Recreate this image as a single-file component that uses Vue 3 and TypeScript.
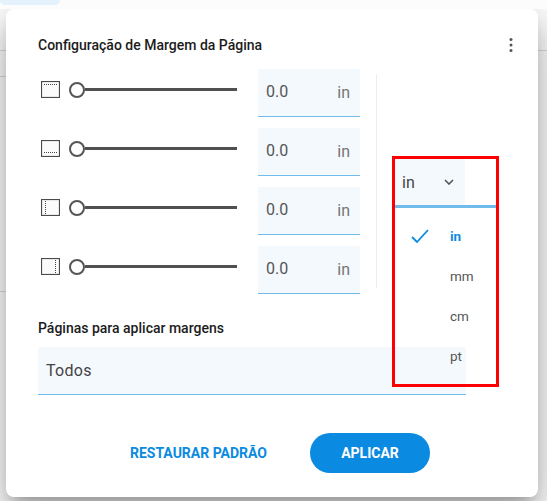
<script setup lang="ts">
const rows = [
  { id: 'top', dash: 'M3 3.5H17' },
  { id: 'bottom', dash: 'M3 12.5H17' },
  { id: 'left', dash: 'M4.5 2V15' },
  { id: 'right', dash: 'M14.5 2V15' },
]
const options = ['in', 'mm', 'cm', 'pt']
</script>

<template>
  <div class="page">
    <div class="topbar"><div class="pill"></div></div>
    <div class="rule rule-a"></div>
    <div class="rule rule-b"></div>
    <div class="rule rule-c"></div>
    <section class="dialog">
      <header class="head">
        <h2>Configuração de Margem da Página</h2>
        <svg class="more" width="4" height="16" viewBox="0 0 4 16">
          <circle cx="2" cy="2.5" r="1.5" />
          <circle cx="2" cy="8" r="1.5" />
          <circle cx="2" cy="13.5" r="1.5" />
        </svg>
      </header>
      <div class="body">
        <div class="rows">
          <div v-for="r in rows" :key="r.id" class="row">
            <div class="control">
              <svg class="margin-icon" width="19" height="17" viewBox="0 0 19 17">
                <rect x="0.5" y="0.5" width="18" height="16" fill="#fbfbfb" stroke="#4a4a4a" stroke-width="1.2" />
                <path :d="r.dash" stroke="#444" stroke-dasharray="1 1" fill="none" />
              </svg>
              <div class="slider">
                <span class="thumb"></span>
                <span class="track"></span>
              </div>
            </div>
            <div class="field">
              <span class="value">0.0</span>
              <span class="unit">in</span>
            </div>
          </div>
        </div>
        <div class="divider"></div>
        <div class="unit-col">
          <div class="select">
            <span>in</span>
            <svg width="10" height="6" viewBox="0 0 10 6">
              <path d="M1 1L5 5L9 1" fill="none" stroke="#555" stroke-width="1.6" />
            </svg>
          </div>
          <ul class="menu">
            <li v-for="(o, i) in options" :key="o" :class="{ active: i === 0 }">
              <svg v-if="i === 0" class="check" width="18" height="14" viewBox="0 0 18 14">
                <path d="M1 8L6 13L17 1" fill="none" stroke="#0a8ae0" stroke-width="1.8" />
              </svg>
              <span>{{ o }}</span>
            </li>
          </ul>
        </div>
      </div>
      <h3 class="sub">Páginas para aplicar margens</h3>
      <div class="pages">Todos</div>
      <footer class="actions">
        <button class="reset">RESTAURAR PADRÃO</button>
        <button class="apply">APLICAR</button>
      </footer>
    </section>
  </div>
</template>

<style>
html, body { margin: 0; }
</style>

<style scoped>
.page {
  position: relative;
  width: 547px;
  height: 501px;
  overflow: hidden;
  background: #fff;
  font-family: Roboto, "Liberation Sans", sans-serif;
  box-sizing: border-box;
  padding: 9px 0 0 6px;
}
.topbar {
  position: absolute;
  left: 0;
  top: 0;
  width: 100%;
  height: 9px;
  background: #fcfcfc;
  z-index: 2;
}
.pill {
  width: 60px;
  height: 5px;
  background: #e3f2fd;
  border-radius: 0 0 14px 14px;
}
.rule {
  position: absolute;
  height: 1px;
  background: #ddd;
  left: 0;
}
.rule-a { top: 50px; width: 547px; }
.rule-b { top: 76px; width: 6px; }
.rule-c { top: 291px; width: 6px; }
.dialog {
  position: relative;
  width: 532px;
  height: 488px;
  background: #fff;
  border-radius: 8px;
  box-shadow: 0 11px 15px -7px rgba(0, 0, 0, 0.25), 0 24px 38px 3px rgba(0, 0, 0, 0.16), 0 9px 46px 8px rgba(0, 0, 0, 0.14);
  box-sizing: border-box;
  padding: 26px 25px 0 32px;
}
.head {
  display: flex;
  justify-content: space-between;
  align-items: center;
  height: 20px;
}
h2 {
  margin: 0;
  font-size: 14px;
  font-weight: 500;
  color: #1c1c1c;
}
.more { fill: #555; }
.body {
  display: flex;
  margin-top: 14px;
  height: 251px;
}
.rows { width: 322px; }
.row {
  display: flex;
  align-items: flex-start;
  height: 48px;
  margin-bottom: 11px;
}
.control {
  display: flex;
  align-items: center;
  height: 41px;
}
.margin-icon { margin-left: 3px; flex: none; }
.slider {
  display: flex;
  align-items: center;
  width: 168px;
  margin-left: 9px;
}
.thumb {
  width: 16px;
  height: 16px;
  box-sizing: border-box;
  border: 2px solid #555;
  border-radius: 50%;
  background: #fff;
  flex: none;
}
.track { flex: 1; height: 3px; background: #505050; }
.field {
  display: flex;
  justify-content: space-between;
  align-items: center;
  width: 102px;
  height: 48px;
  margin-left: 21px;
  box-sizing: border-box;
  padding: 0 10px 3px 8px;
  background: #f4f9fd;
  border-bottom: 1px solid #72bcec;
  color: #555;
}
.value { font-size: 16px; }
.unit { font-size: 16px; color: #757575; margin-top: 3px; }
.divider {
  width: 1px;
  height: 214px;
  margin: 5px 0 0 16px;
  background: #eee;
}
.unit-col {
  position: absolute;
  left: 386px;
  top: 147px;
  width: 107px;
  height: 231px;
  box-sizing: border-box;
  border: 3px solid #f00;
}
.select {
  display: flex;
  align-items: center;
  justify-content: space-between;
  width: 70px;
  height: 46px;
  box-sizing: border-box;
  padding: 0 11px 0 7px;
  background: #f4f9fd;
  color: #444;
  font-size: 16px;
}
.menu {
  list-style: none;
  margin: 0;
  padding: 8px 0 0;
  border-top: 3px solid #6fbbeb;
}
.menu li {
  position: relative;
  height: 40px;
  padding-left: 55px;
  display: flex;
  align-items: center;
  font-size: 13.5px;
  color: #555;
}
.menu li.active {
  color: #0a8ae0;
  font-weight: 700;
}
.check { position: absolute; left: 16px; top: 13px; }
.sub {
  margin: 0;
  font-size: 14px;
  font-weight: 500;
  color: #1c1c1c;
}
.pages {
  margin-top: 11px;
  width: 428px;
  height: 48px;
  box-sizing: border-box;
  padding: 0 8px;
  display: flex;
  align-items: center;
  background: #f4f9fd;
  border-bottom: 1px solid #72bcec;
  border-radius: 3px 3px 0 0;
  color: #444;
  font-size: 16px;
  letter-spacing: 0.3px;
}
.actions {
  display: flex;
  justify-content: flex-end;
  align-items: center;
  gap: 43px;
  margin-top: 38px;
  padding-right: 83px;
}
button {
  border: 0;
  font-family: inherit;
  font-weight: 700;
  font-size: 14px;
  padding: 0;
  cursor: pointer;
}
.reset { background: none; color: #0a8ae0; }
.apply {
  width: 120px;
  height: 40px;
  border-radius: 20px;
  background: #0a8ae0;
  color: #fff;
}
</style>
